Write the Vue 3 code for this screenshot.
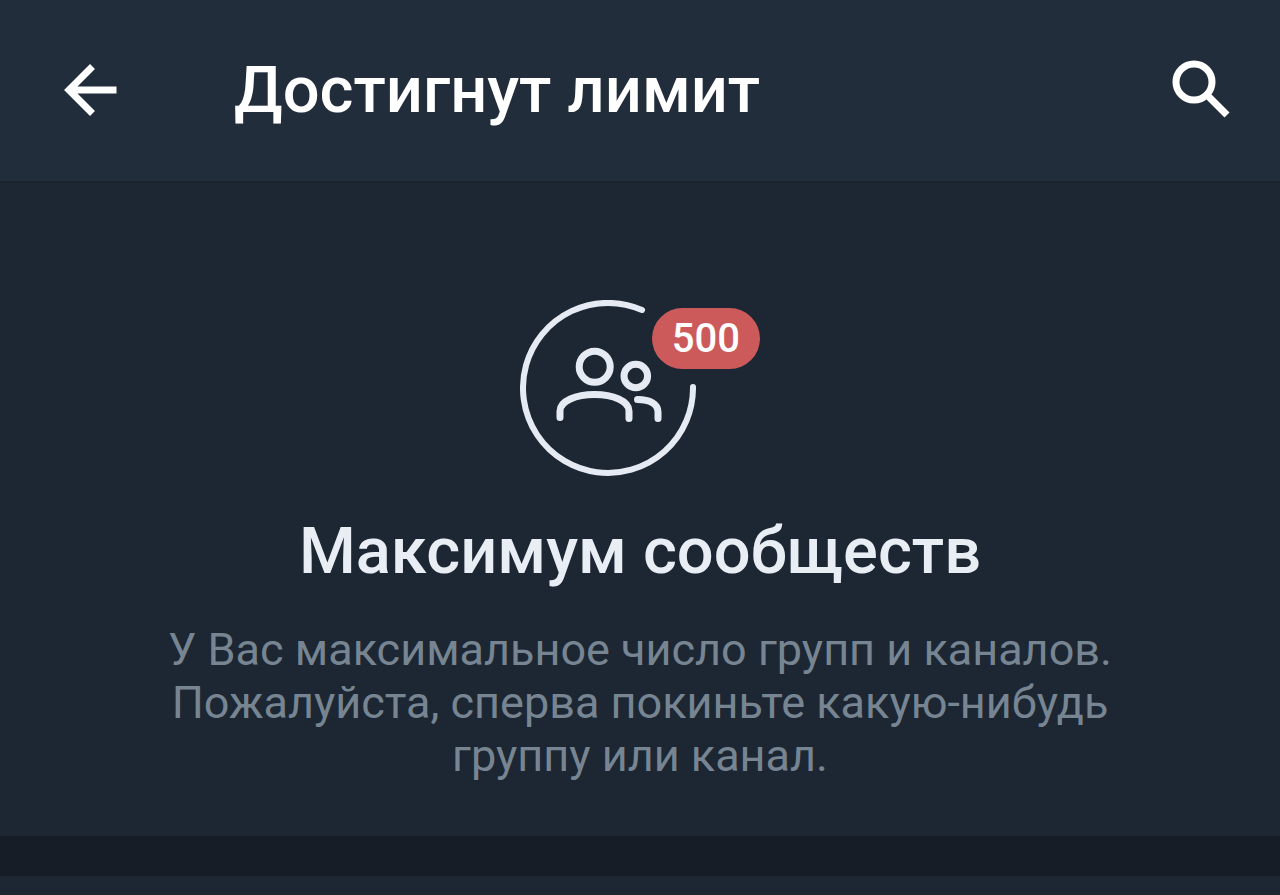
<template>
  <div class="limit-page">
    <header class="topbar">
      <button class="icon-button" type="button" aria-label="Назад" @click="goBack">
        <svg viewBox="0 0 56 56" width="56" height="56">
          <path d="M30.500 4.500 L7 28 L30.500 51.500 M9 28 H54.500" />
        </svg>
      </button>
      <h1 class="topbar-title">Достигнут лимит</h1>
      <button class="icon-button" type="button" aria-label="Поиск">
        <svg viewBox="0 0 60 60" width="60" height="60">
          <circle cx="22" cy="22" r="18" />
          <path d="M37 37 L55 55" />
          <path class="search-neck" d="M34 34 L38 38" />
        </svg>
      </button>
    </header>

    <main class="limit-panel">
      <div class="limit-picture">
        <svg class="limit-icon" viewBox="0 0 176 176" width="176" height="176" aria-hidden="true">
          <path class="limit-ring" d="M122 10 A85 85 0 1 0 173 87" />
          <circle cx="74.700" cy="66.700" r="15.500" />
          <circle cx="115.800" cy="76" r="11.800" />
          <path d="M40 117.500 V111 C40 101 56 94.500 74.500 94.500 C93 94.500 109 101 109 111 V118.500" />
          <path d="M117.500 99.500 C130 99.500 138 104 138 112 V118.500" />
        </svg>
        <span class="limit-badge">{{ limit }}</span>
      </div>
      <h2>Максимум сообществ</h2>
      <p>
        У Вас максимальное число групп и каналов.
        Пожалуйста, сперва покиньте какую-нибудь
        группу или канал.
      </p>
    </main>

    <div class="section-gap"></div>
  </div>
</template>

<script setup>
import { ref } from 'vue'

const limit = ref(500)

function goBack() {
  window.history.back()
}
</script>

<style>
body {
  margin: 0;
  background: #1d2733;
}
</style>

<style scoped>
.limit-page {
  min-height: 100vh;
  background: #1d2733;
  color: #fff;
  font-family: Roboto, "Noto Sans", sans-serif;
}

.topbar {
  display: flex;
  align-items: center;
  padding: 50px 48px 51px 62px;
  border-bottom: 2px solid #1b232d;
  background: #222d3b;
}

.topbar-title {
  flex: 1;
  margin: 0 0 0 116px;
  font-size: 65px;
  font-weight: 500;
  line-height: 80px;
}

.icon-button {
  display: flex;
  padding: 0;
  border: none;
  background: none;
  color: #fff;
  cursor: pointer;
}

.icon-button svg {
  fill: none;
  stroke: currentColor;
  stroke-width: 7;
}

.icon-button .search-neck {
  stroke-width: 5;
}

.limit-panel {
  display: flex;
  flex-direction: column;
  align-items: center;
  padding: 117px 120px 54px;
  text-align: center;
}

.limit-picture {
  position: relative;
  width: 240px;
}

.limit-icon {
  display: block;
  fill: none;
  stroke: #e6ebf3;
  stroke-width: 7;
  stroke-linecap: round;
}

.limit-ring {
  stroke-width: 6;
}

.limit-badge {
  position: absolute;
  top: 8px;
  right: 0;
  padding: 0 20px;
  border-radius: 31px;
  background: #cd5a5b;
  color: #fff;
  font-size: 40px;
  font-weight: 500;
  line-height: 61px;
}

.limit-panel h2 {
  margin: 35px 0 0;
  color: #e9eef5;
  font-size: 65px;
  font-weight: 500;
  line-height: 80px;
}

.limit-panel p {
  max-width: 960px;
  margin: 32px 0 0;
  color: #778592;
  font-size: 45px;
  line-height: 53px;
}

.section-gap {
  height: 40px;
  background: #161d26;
}
</style>
